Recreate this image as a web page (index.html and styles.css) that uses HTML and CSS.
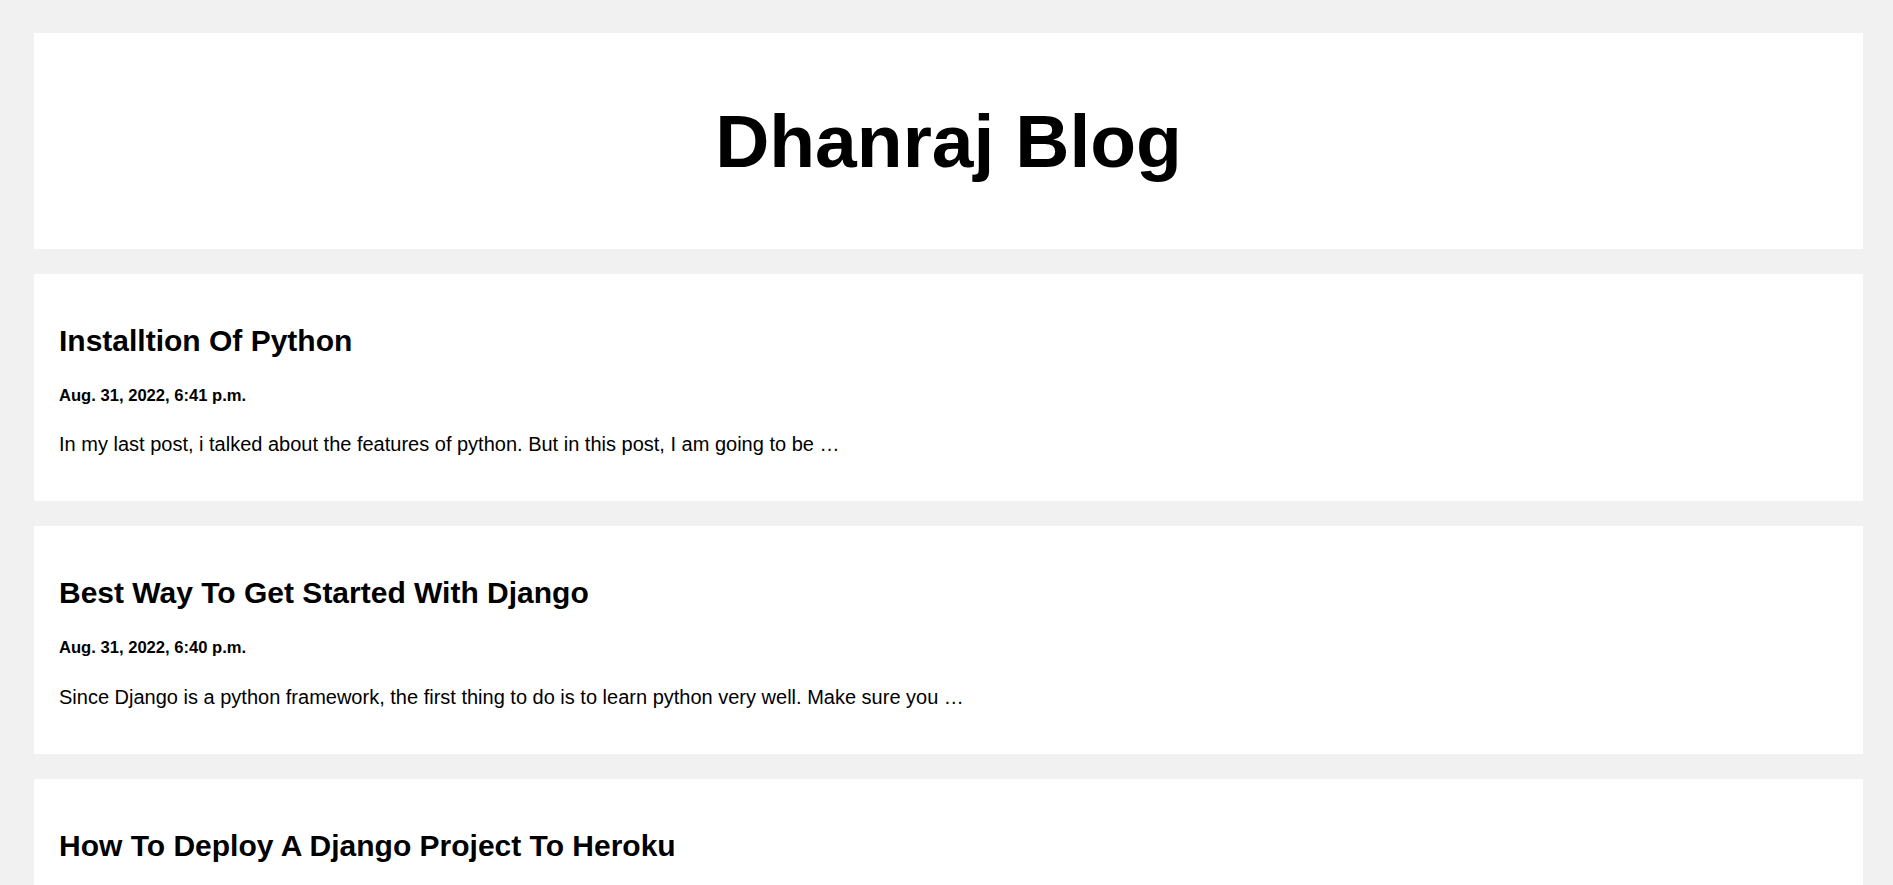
FILE: index.html
```html
<!DOCTYPE html>
<html lang="en">
<head>
<meta charset="utf-8">
<title>Dhanraj Blog</title>
<link rel="stylesheet" href="styles.css">
</head>
<body>
<div class="page">
  <header class="header">
    <h1 class="site-title">Dhanraj Blog</h1>
  </header>
  <article class="card">
    <h2 class="post-title">Installtion Of Python</h2>
    <h5 class="post-date">Aug. 31, 2022, 6:41 p.m.</h5>
    <p class="post-excerpt">In my last post, i talked about the features of python. But in this post, I am going to be …</p>
  </article>
  <article class="card">
    <h2 class="post-title">Best Way To Get Started With Django</h2>
    <h5 class="post-date">Aug. 31, 2022, 6:40 p.m.</h5>
    <p class="post-excerpt">Since Django is a python framework, the first thing to do is to learn python very well. Make sure you …</p>
  </article>
  <article class="card">
    <h2 class="post-title">How To Deploy A Django Project To Heroku</h2>
  </article>
</div>
</body>
</html>
```

FILE: styles.css
```css
html, body {
  margin: 0;
  padding: 0;
  background: #f1f1f1;
}

body {
  font-family: "Liberation Sans", Arial, sans-serif;
  color: #000;
}

.page {
  padding: 33px 30px 0 34px;
}

.header {
  background: #fff;
  padding: 37px 20px;
  text-align: center;
}

.site-title {
  margin: 28px 0;
  font-size: 75px;
  font-weight: bold;
}

.card {
  background: #fff;
  padding: 25px;
  margin-top: 25px;
}

.post-title {
  font-size: 30px;
  font-weight: bold;
  margin: 0.83em 0;
}

.post-date {
  font-size: 16.6px;
  font-weight: bold;
  margin: 1.67em 0;
}

.post-excerpt {
  font-size: 20px;
  margin: 20px 0;
}
```
